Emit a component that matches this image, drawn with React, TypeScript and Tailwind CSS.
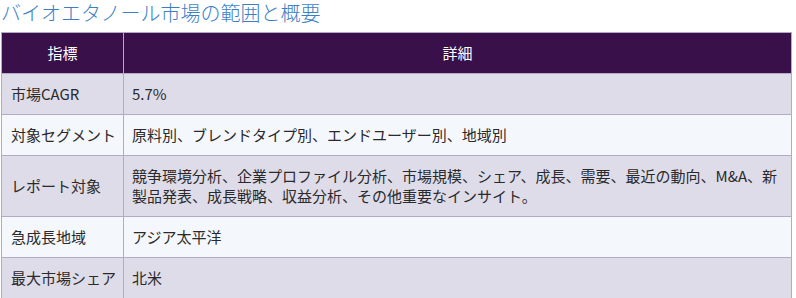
const rows: { label: string; value: string }[] = [
  { label: "市場CAGR", value: "5.7%" },
  { label: "対象セグメント", value: "原料別、ブレンドタイプ別、エンドユーザー別、地域別" },
  {
    label: "レポート対象",
    value:
      "競争環境分析、企業プロファイル分析、市場規模、シェア、成長、需要、最近の動向、M&A、新製品発表、成長戦略、収益分析、その他重要なインサイト。",
  },
  { label: "急成長地域", value: "アジア太平洋" },
  { label: "最大市場シェア", value: "北米" },
];

const App = () => {
  return (
    <div
      className="w-[796px] h-[298px] bg-white overflow-hidden"
      style={{ fontFamily: '"Noto Sans CJK JP", "Noto Sans", sans-serif' }}
    >
      <h2 className="text-[20px] leading-[26px] text-[#3b7ec5] font-light pl-px mb-[6px]">
        バイオエタノール市場の範囲と概要
      </h2>

      <table className="ml-px w-[791px] border-collapse text-[15px] leading-[20px] text-[#2a2a2a]">
        <thead>
          <tr className="bg-[#39104a] text-white">
            <th className="w-[122px] border border-[#b3abc6] py-[10px] font-normal text-center">
              指標
            </th>
            <th className="border border-[#b3abc6] py-[10px] font-normal text-center">詳細</th>
          </tr>
        </thead>
        <tbody>
          {rows.map((row, i) => (
            <tr key={row.label} className={i % 2 === 0 ? "bg-[#dfdcea]" : "bg-[#f4f7fc]"}>
              <td className="border border-[#b3abc6] py-[10px] pl-[9px] pr-1 whitespace-nowrap">
                {row.label}
              </td>
              <td className="border border-[#b3abc6] py-[10px] pl-[8px] pr-2">{row.value}</td>
            </tr>
          ))}
        </tbody>
      </table>
    </div>
  );
};

export default App;
